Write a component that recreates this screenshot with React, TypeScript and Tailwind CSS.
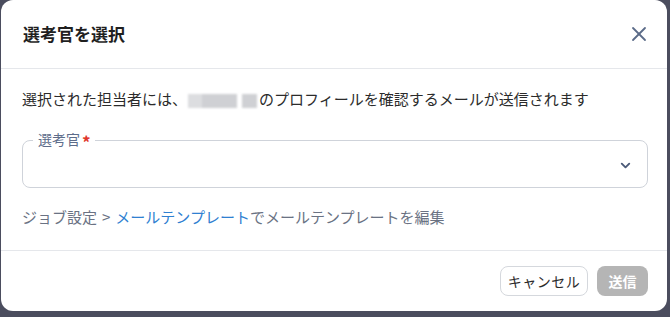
import { X, ChevronDown } from 'lucide-react';

const font = { fontFamily: '"Noto Sans CJK JP", "Noto Sans", sans-serif' };

// ぼかされた氏名
const BlurredName = () => (
  <span className="inline-flex items-center h-[18px] w-[70px] align-[-3px] mx-[1px] gap-[5px]">
    <span className="flex h-[14px] w-[49px] blur-[1px]">
      <span className="h-full w-[14px] bg-[#dcdde0]" />
      <span className="h-full w-[35px] bg-[#cfd0d4]" />
    </span>
    <span className="h-[14px] w-[15px] bg-[#cfd0d4] blur-[1px]" />
  </span>
);

export default function App() {
  return (
    <div className="w-[670px] h-[317px] bg-[#4b4d5e] overflow-hidden" style={font}>
      <div className="ml-[1px] w-[666px] h-[311px] bg-white rounded-[12px] flex flex-col">
        {/* ヘッダー */}
        <div className="h-[69px] shrink-0 flex items-center justify-between pl-[22px] pr-[16px] border-b border-[#e5e7eb]">
          <h2 className="text-[17px] font-bold text-[#1f1f1f]">選考官を選択</h2>
          <button type="button" className="w-[24px] h-[24px] flex items-center justify-center text-[#5b6b88]">
            <X size={24} strokeWidth={1.8} />
          </button>
        </div>

        {/* 本文 */}
        <div className="flex-1 px-[21px] pt-[19px] border-b border-[#e5e7eb]">
          <p className="text-[15px] leading-[22px] text-[#2b2b2b]">
            選択された担当者には、<BlurredName />のプロフィールを確認するメールが送信されます
          </p>

          <div className="relative mt-[30px] h-[48px] w-[626px] rounded-[8px] border border-[#cfd3da] flex items-center justify-end pr-[14px]">
            <span className="absolute -top-[12px] left-[10px] bg-white pl-[5px] pr-[4px] flex items-center text-[14px] leading-[20px] text-[#5d6c8a]">
              選考官<span className="ml-[2px] text-[17px] leading-[20px] text-[#e0362c] font-bold translate-y-[3px]">*</span>
            </span>
            <ChevronDown size={15} strokeWidth={3} className="text-[#4b5a78] mt-[2px]" />
          </div>

          <p className="mt-[18px] text-[15px] leading-[22px] text-[#6a7283]">
            ジョブ設定<span className="mx-[5px]">&gt;</span><span className="text-[#2f80d1]">メールテンプレート</span>でメールテンプレートを編集
          </p>
        </div>

        {/* フッター */}
        <div className="h-[60px] shrink-0 flex items-center justify-end gap-[9px] pr-[19px]">
          <button type="button" className="h-[30px] w-[88px] rounded-[8px] border border-[#d5d8dd] bg-white text-[14px] tracking-[0.5px] text-[#2b2b2b]">
            キャンセル
          </button>
          <button type="button" className="h-[30px] w-[51px] rounded-[8px] bg-[#b5b5b5] text-[14px] font-semibold text-white">
            送信
          </button>
        </div>
      </div>
    </div>
  );
}
